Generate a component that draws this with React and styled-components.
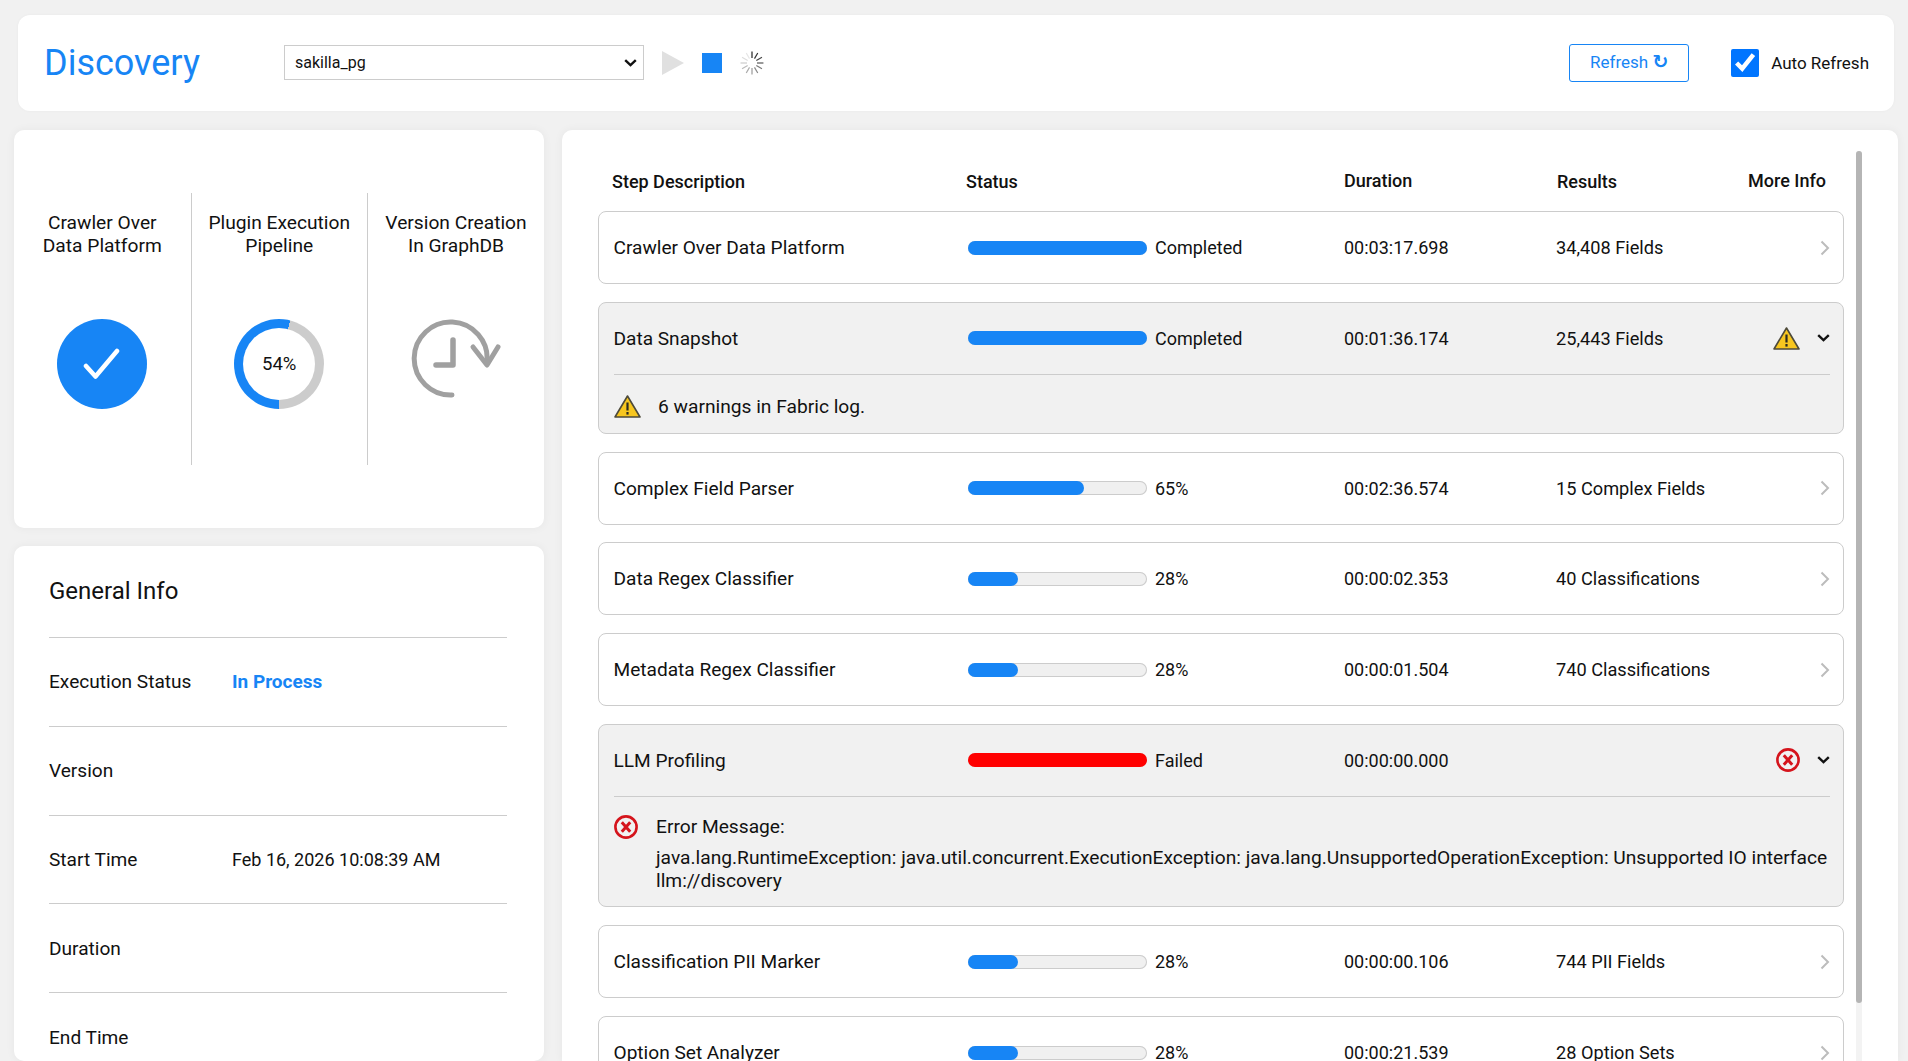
import styled, { createGlobalStyle } from "styled-components";

const BLUE = "#1785f5";
const FONT = `Roboto, "Liberation Sans", sans-serif`;
const SELECT_ARROW = `url("data:image/svg+xml,%3Csvg xmlns='http://www.w3.org/2000/svg' width='13' height='8'%3E%3Cpolyline points='1.2,1.2 6.5,6.2 11.8,1.2' fill='none' stroke='%23111' stroke-width='2.4'/%3E%3C/svg%3E")`;

const steps = [
  { name: "Crawler Over Data Platform", progress: 100, status: "Completed", duration: "00:03:17.698", results: "34,408 Fields" },
  {
    name: "Data Snapshot",
    progress: 100,
    status: "Completed",
    duration: "00:01:36.174",
    results: "25,443 Fields",
    warning: "6 warnings in Fabric log.",
  },
  { name: "Complex Field Parser", progress: 65, status: "65%", duration: "00:02:36.574", results: "15 Complex Fields" },
  { name: "Data Regex Classifier", progress: 28, status: "28%", duration: "00:00:02.353", results: "40 Classifications" },
  { name: "Metadata Regex Classifier", progress: 28, status: "28%", duration: "00:00:01.504", results: "740 Classifications" },
  {
    name: "LLM Profiling",
    progress: 100,
    status: "Failed",
    duration: "00:00:00.000",
    results: "",
    failed: true,
    error:
      "java.lang.RuntimeException: java.util.concurrent.ExecutionException: java.lang.UnsupportedOperationException: Unsupported IO interface llm://discovery",
  },
  { name: "Classification PII Marker", progress: 28, status: "28%", duration: "00:00:00.106", results: "744 PII Fields" },
  { name: "Option Set Analyzer", progress: 28, status: "28%", duration: "00:00:21.539", results: "28 Option Sets" },
];

const info = [
  { label: "Execution Status", value: "In Process", active: true },
  { label: "Version" },
  { label: "Start Time", value: "Feb 16, 2026 10:08:39 AM" },
  { label: "Duration" },
  { label: "End Time" },
];

const WarningIcon = () => (
  <svg width="27" height="23" viewBox="0 0 27 23">
    <path d="M13.5 1 L26 22 H1 Z" fill="#f7c61f" stroke="#4d4a3a" strokeWidth="1.6" strokeLinejoin="round" />
    <path d="M13.5 7.5 V15.5" stroke="#2b2a20" strokeWidth="2.2" />
    <path d="M13.5 17 V19.6" stroke="#2b2a20" strokeWidth="2.2" />
  </svg>
);

const ErrorIcon = () => (
  <svg width="24" height="24" viewBox="0 0 24 24">
    <circle cx="12" cy="12" r="10.6" fill="none" stroke="#d5141c" strokeWidth="2.6" />
    <path d="M7.8 7.3 L16.2 16.7 M16.2 7.3 L7.8 16.7" stroke="#d5141c" strokeWidth="3" />
  </svg>
);

const ChevronRight = () => (
  <svg width="10" height="16" viewBox="0 0 10 16">
    <polyline points="1.5,1.5 8,8 1.5,14.5" fill="none" stroke="#bcbcbc" strokeWidth="2" />
  </svg>
);

const ChevronDown = () => (
  <svg width="13" height="8" viewBox="0 0 13 8">
    <polyline points="1.2,1.2 6.5,6.2 11.8,1.2" fill="none" stroke="#111" strokeWidth="2.4" />
  </svg>
);

const spinnerShades = ["#222", "#333", "#444", "#555", "#777", "#888", "#999", "#aaa", "#bbb", "#ccc", "#ddd", "#e6e6e6"];

const Spinner = () => (
  <svg width="24" height="24" viewBox="0 0 24 24">
    {spinnerShades.map((shade, i) => (
      <line
        key={shade}
        x1="12"
        y1="0.5"
        x2="12"
        y2="7"
        stroke={shade}
        strokeWidth="1.2"
        transform={`rotate(${i * 30} 12 12)`}
      />
    ))}
  </svg>
);

const PendingClock = () => (
  <svg width="95" height="84" viewBox="0 0 95 84">
    <path d="M43 76 A36.5 36.5 0 1 1 78 43" fill="none" stroke="#a0a0a0" strokeWidth="5" strokeLinecap="round" />
    <polyline points="44,21 44,46 27,46" fill="none" stroke="#a0a0a0" strokeWidth="5.5" strokeLinecap="round" strokeLinejoin="round" />
    <polyline points="64,28 78,46 89,28" fill="none" stroke="#a0a0a0" strokeWidth="5" strokeLinecap="round" strokeLinejoin="round" />
  </svg>
);

const App = () => (
  <>
    <GlobalStyle />
    <Page>
      <TopBar>
        <Title>Discovery</Title>
        <DbSelect defaultValue="sakilla_pg">
          <option>sakilla_pg</option>
        </DbSelect>
        <PlayButton />
        <StopButton />
        <SpinnerSlot>
          <Spinner />
        </SpinnerSlot>
        <RefreshButton>
          Refresh <RefreshGlyph>↻</RefreshGlyph>
        </RefreshButton>
        <AutoRefresh>
          <AutoCheck type="checkbox" defaultChecked />
          Auto Refresh
        </AutoRefresh>
      </TopBar>

      <Main>
        <LeftColumn>
          <PipelineCard>
            <PipelineStep>
              <StepTitle>
                Crawler Over
                <br />
                Data Platform
              </StepTitle>
              <DoneCircle>
                <svg width="38" height="32" viewBox="0 0 38 32">
                  <polyline
                    points="3,18 12.5,28.5 34,3"
                    fill="none"
                    stroke="#fff"
                    strokeWidth="4.5"
                    strokeLinecap="round"
                    strokeLinejoin="round"
                  />
                </svg>
              </DoneCircle>
            </PipelineStep>
            <PipelineStep>
              <StepTitle>
                Plugin Execution
                <br />
                Pipeline
              </StepTitle>
              <Ring $value={54}>
                <RingCenter>54%</RingCenter>
              </Ring>
            </PipelineStep>
            <PipelineStep $last>
              <StepTitle>
                Version Creation
                <br />
                In GraphDB
              </StepTitle>
              <PendingClock />
            </PipelineStep>
          </PipelineCard>

          <InfoCard>
            <InfoHeading>General Info</InfoHeading>
            {info.map((row) => (
              <InfoRow key={row.label}>
                <InfoLabel>{row.label}</InfoLabel>
                <InfoValue $active={row.active}>{row.value}</InfoValue>
              </InfoRow>
            ))}
          </InfoCard>
        </LeftColumn>

        <StepsPanel>
          <TableHead>
            <span>Step Description</span>
            <span>Status</span>
            <RaisedHead>Duration</RaisedHead>
            <span>Results</span>
            <RaisedHead>More Info</RaisedHead>
          </TableHead>

          <StepList>
            {steps.map((step) => {
              const open = step.warning || step.error;
              return (
                <StepRow key={step.name} $open={open}>
                  <StepMain>
                    <StepName>{step.name}</StepName>
                    <StatusCell>
                      <Bar>
                        <BarFill $failed={step.failed} style={{ width: `${step.progress}%` }} />
                      </Bar>
                      <span>{step.status}</span>
                    </StatusCell>
                    <span>{step.duration}</span>
                    <ResultCell>{step.results}</ResultCell>
                    <MoreCell>
                      {step.warning && <WarningIcon />}
                      {step.error && <ErrorIcon />}
                      {open ? <ChevronDown /> : <ChevronRight />}
                    </MoreCell>
                  </StepMain>
                  {step.warning && (
                    <WarningDetail>
                      <WarningIcon />
                      <span>{step.warning}</span>
                    </WarningDetail>
                  )}
                  {step.error && (
                    <ErrorDetail>
                      <ErrorIcon />
                      <ErrorText>
                        <ErrorTitle>Error Message:</ErrorTitle>
                        <div>{step.error}</div>
                      </ErrorText>
                    </ErrorDetail>
                  )}
                </StepRow>
              );
            })}
          </StepList>

          <ScrollTrack>
            <ScrollThumb />
          </ScrollTrack>
        </StepsPanel>
      </Main>
    </Page>
  </>
);

export default App;

const GlobalStyle = createGlobalStyle`
  html, body {
    margin: 0;
    height: 100%;
    overflow: hidden;
    background: #f1f1f1;
    font-family: ${FONT};
    color: #111;
  }
  * {
    box-sizing: border-box;
  }
`;

const Page = styled.div`
  height: 1061px;
  display: flex;
  flex-direction: column;
  overflow: hidden;
`;

const TopBar = styled.header`
  height: 96px;
  margin: 15px 14px 0 18px;
  padding: 0 25px 0 26px;
  display: flex;
  align-items: center;
  background: #fff;
  border-radius: 12px;
  box-shadow: 0 0 3px rgba(0, 0, 0, 0.04);
`;

const Title = styled.h1`
  width: 240px;
  margin: 0;
  font-size: 36px;
  font-weight: 400;
  color: ${BLUE};
`;

const DbSelect = styled.select`
  width: 360px;
  height: 35px;
  margin-bottom: 1px;
  padding-left: 10px;
  font-family: ${FONT};
  font-size: 16px;
  color: #111;
  background: #fff ${SELECT_ARROW} no-repeat right 6px center;
  border: 1px solid #ccc;
  border-radius: 0;
  appearance: none;
`;

const PlayButton = styled.span`
  margin-left: 18px;
  width: 0;
  height: 0;
  border-left: 22px solid #e0e0e0;
  border-top: 12px solid transparent;
  border-bottom: 12px solid transparent;
`;

const StopButton = styled.span`
  margin-left: 18px;
  width: 20px;
  height: 20px;
  background: ${BLUE};
`;

const SpinnerSlot = styled.span`
  margin-left: 18px;
  display: flex;
`;

const RefreshButton = styled.button`
  margin-left: auto;
  width: 120px;
  height: 38px;
  padding-bottom: 3px;
  font-family: ${FONT};
  font-size: 17px;
  color: ${BLUE};
  background: #fff;
  border: 1px solid ${BLUE};
  border-radius: 3px;
`;

const RefreshGlyph = styled.span`
  font-family: "DejaVu Sans", sans-serif;
  font-size: 19px;
  font-weight: 700;
  line-height: 1;
`;

const AutoRefresh = styled.label`
  margin-left: 42px;
  display: flex;
  align-items: center;
  gap: 12px;
  font-size: 17px;
  color: #111;
`;

const AutoCheck = styled.input`
  width: 28px;
  height: 28px;
  margin: 0;
  accent-color: #0075ff;
`;

const Main = styled.main`
  flex: 1;
  min-height: 0;
  margin-top: 19px;
  padding: 0 10px 0 14px;
  display: flex;
  gap: 18px;
`;

const LeftColumn = styled.div`
  width: 530px;
  flex: none;
  display: flex;
  flex-direction: column;
  gap: 18px;
`;

const Card = styled.section`
  background: #fff;
  border-radius: 10px;
  box-shadow: 0 0 10px rgba(0, 0, 0, 0.05);
`;

const PipelineCard = styled(Card)`
  height: 398px;
  padding: 63px 0;
  display: grid;
  grid-template-columns: 177.5px 176.5px 1fr;
`;

const PipelineStep = styled.div`
  padding-top: 18px;
  display: flex;
  flex-direction: column;
  align-items: center;
  gap: 62px;
  border-right: ${(p) => (p.$last ? "none" : "1px solid #ccc")};
`;

const StepTitle = styled.div`
  font-size: 19.2px;
  line-height: 23px;
  text-align: center;
`;

const DoneCircle = styled.div`
  width: 90px;
  height: 90px;
  display: flex;
  align-items: center;
  justify-content: center;
  border-radius: 50%;
  background: ${BLUE};
`;

const Ring = styled.div`
  width: 90px;
  height: 90px;
  display: flex;
  align-items: center;
  justify-content: center;
  border-radius: 50%;
  background: conic-gradient(from 180deg, ${BLUE} 0 ${(p) => p.$value}%, #ccc ${(p) => p.$value}% 100%);
`;

const RingCenter = styled.div`
  width: 72px;
  height: 72px;
  display: flex;
  align-items: center;
  justify-content: center;
  border-radius: 50%;
  background: #fff;
  font-size: 18.5px;
`;

const InfoCard = styled(Card)`
  flex: 1;
  min-height: 0;
  padding: 0 37px 0 35px;
`;

const InfoHeading = styled.h2`
  height: 91px;
  margin: 0;
  padding-bottom: 2px;
  display: flex;
  align-items: center;
  font-size: 24px;
  font-weight: 400;
`;

const InfoRow = styled.div`
  height: 88.8px;
  display: flex;
  align-items: center;
  border-top: 1px solid #ccc;
`;

const InfoLabel = styled.span`
  width: 183px;
  font-size: 19.1px;
`;

const InfoValue = styled.span`
  color: ${(p) => (p.$active ? BLUE : "#111")};
  font-size: ${(p) => (p.$active ? "19px" : "18px")};
  font-weight: ${(p) => (p.$active ? 700 : 400)};
`;

const StepsPanel = styled.section`
  position: relative;
  flex: 1;
  min-width: 0;
  padding: 0 54px 0 36px;
  background: #fff;
  border-radius: 10px 10px 0 0;
  box-shadow: 0 0 10px rgba(0, 0, 0, 0.05);
  overflow: hidden;
`;

const TableHead = styled.div`
  height: 81px;
  padding: 28px 18px 7px 14px;
  display: grid;
  grid-template-columns: 354px 378px 213px 1fr auto;
  align-items: center;
  font-size: 18px;
  font-weight: 500;
`;

const RaisedHead = styled.span`
  margin-bottom: 2px;
`;

const StepList = styled.div`
  display: flex;
  flex-direction: column;
  gap: 17.8px;
`;

const StepRow = styled.div`
  padding: 0 13.5px 0 14.5px;
  border: 1px solid #ccc;
  border-radius: 8px;
  background: ${(p) => (p.$open ? "#f1f1f1" : "#fff")};
  font-size: 18px;
`;

const StepMain = styled.div`
  height: 71px;
  display: grid;
  grid-template-columns: 354px 376.5px 212px 1fr auto;
  align-items: center;
`;

const StepName = styled.span`
  font-size: 19.1px;
`;

const ResultCell = styled.span`
  font-size: 18.2px;
`;

const StatusCell = styled.div`
  display: flex;
  align-items: center;
  gap: 8.5px;
`;

const Bar = styled.div`
  width: 179px;
  height: 14px;
  background: #f0f0f0;
  box-shadow: inset 0 0 0 1px #ccc;
  border-radius: 7px;
`;

const BarFill = styled.div`
  height: 14px;
  background: ${(p) => (p.$failed ? "#ff0000" : BLUE)};
  border-radius: 7px;
`;

const MoreCell = styled.div`
  display: flex;
  align-items: center;
  justify-content: flex-end;
  gap: 17px;
`;

const WarningDetail = styled.div`
  height: 59px;
  padding-top: 5px;
  display: flex;
  align-items: center;
  gap: 17.5px;
  border-top: 1px solid #ccc;
  font-size: 19.2px;
`;

const ErrorDetail = styled.div`
  height: 110.5px;
  padding-top: 18.5px;
  display: flex;
  gap: 18.5px;
  border-top: 1px solid #ccc;
  font-size: 19.2px;
`;

const ErrorText = styled.div`
  line-height: 23px;
  flex: 1;
  min-width: 0;
`;

const ErrorTitle = styled.div`
  margin-bottom: 8px;
`;

const ScrollTrack = styled.div`
  position: absolute;
  top: 21px;
  right: 36px;
  bottom: 0;
  width: 6px;
  background: #f3f3f3;
  border-radius: 3px 3px 0 0;
`;

const ScrollThumb = styled.div`
  height: 852px;
  background: #b5b5b5;
  border-radius: 3px;
`;
